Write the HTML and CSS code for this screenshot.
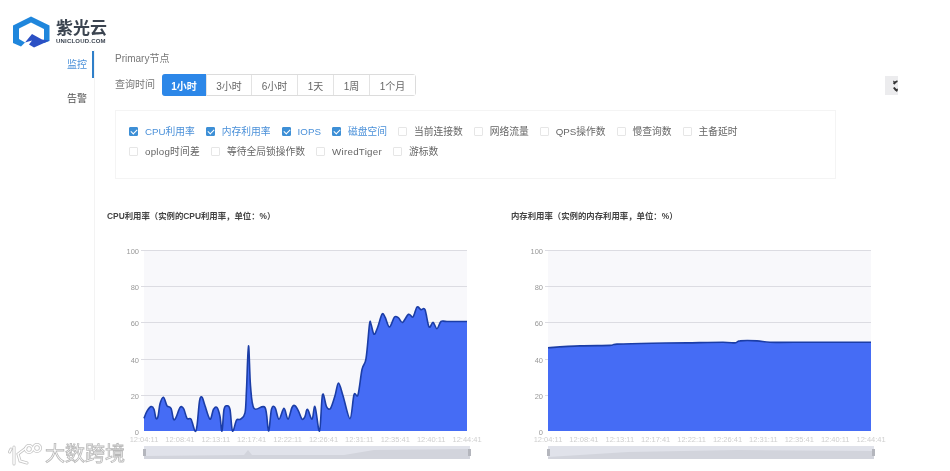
FILE: index.html
```html
<!DOCTYPE html>
<html lang="zh-CN">
<head>
<meta charset="UTF-8" />
<title>监控</title>
<link rel="stylesheet" href="styles.css">
</head>
<body>
<header class="brand">
  <svg class="brand-icon" width="37" height="32" viewBox="0 0 37 32">
    <path fill="#1f86dc" d="M18 .5 36.5 9.5V25L31 27V13L18 6.5 6 12.5V23L12 26.5 8 30.5 0 27V9.500Z"/>
    <path fill="#2b50c4" d="M12 26.5 19 18 29 23.5 36.5 24.5 21 31.5 16 28.5 19 24.5Z"/>
  </svg>
  <div class="brand-text">
    <span class="brand-name">紫光云</span>
    <span class="brand-site">UNICLOUD.COM</span>
  </div>
</header>

<div class="layout">
  <nav class="sidenav">
    <a class="sidenav-item active">监控</a>
    <a class="sidenav-item">告警</a>
  </nav>

  <main class="content">
    <div class="section-title">Primary节点</div>

    <div class="time-row">
      <span class="time-label">查询时间</span>
      <div class="btn-group">
        <button class="active w45">1小时</button>
        <button class="w45">3小时</button>
        <button class="w46">6小时</button>
        <button class="w36">1天</button>
        <button class="w36">1周</button>
        <button class="w45">1个月</button>
      </div>
      <div class="refresh">
        <svg width="13" height="19" viewBox="0 0 13 19">
          <path fill="none" stroke="#333" stroke-width="1.8" d="M12.5 5.2A6 6 0 0 0 8.800 8M8.800 11.5A6 6 0 0 0 12.5 14.5"/>
          <path fill="#333" d="M8 4.5 11.5 6.5 9 8.500ZM13 12.5 12 16 9.5 14Z"/>
        </svg>
      </div>
    </div>

    <div class="metric-box">
      <label class="metric on"><i></i>CPU利用率</label>
      <label class="metric on"><i></i>内存利用率</label>
      <label class="metric on"><i></i>IOPS</label>
      <label class="metric on"><i></i>磁盘空间</label>
      <label class="metric"><i></i>当前连接数</label>
      <label class="metric"><i></i>网络流量</label>
      <label class="metric"><i></i>QPS操作数</label>
      <label class="metric"><i></i>慢查询数</label>
      <label class="metric"><i></i>主备延时</label>
      <label class="metric wide"><i></i>oplog时间差</label>
      <label class="metric"><i></i>等待全局锁操作数</label>
      <label class="metric wide"><i></i>WiredTiger</label>
      <label class="metric"><i></i>游标数</label>
    </div>

    <div class="charts">
      <section class="chart">
        <h3>CPU利用率（实例的CPU利用率，单位：%）</h3>
        <svg id="cpuChart" width="404" height="225" viewBox="0 0 404 225"></svg>
      </section>
      <section class="chart">
        <h3>内存利用率（实例的内存利用率，单位：%）</h3>
        <svg id="memChart" width="404" height="225" viewBox="0 0 404 225"></svg>
      </section>
    </div>
  </main>
</div>

<div class="watermark">
  <svg width="36" height="24" viewBox="0 0 36 24">
    <g class="mark-edge">
      <path d="M3 6 1.5 9M6 4V21M18 5 10 11 12 18 19 20"/>
      <circle cx="21" cy="6" r="3.5"/>
      <circle cx="29" cy="5" r="3.5"/>
    </g>
    <g class="mark-core">
      <path d="M3 6 1.5 9M6 4V21M18 5 10 11 12 18 19 20"/>
      <circle cx="21" cy="6" r="3.5"/>
      <circle cx="29" cy="5" r="3.5"/>
    </g>
  </svg>
  <span>大数跨境</span>
</div>

<script src="charts.js"></script>
</body>
</html>
```

FILE: styles.css
```css
* {
  box-sizing: border-box;
}
html, body {
  height: 100%;
}
body {
  margin: 0;
  background: #fff;
  color: #666;
  font-family: "Liberation Sans", "Noto Sans CJK SC", sans-serif;
  font-size: 10px;
  overflow: hidden;
  filter: blur(0.4px);
}

.brand {
  display: flex;
  height: 50px;
  padding: 16px 0 0 13px;
}
.brand-text {
  display: flex;
  flex-direction: column;
  margin: 2px 0 0 6px;
}
.brand-name {
  font-size: 17px;
  line-height: 21px;
  font-weight: 700;
  color: #3b4450;
}
.brand-site {
  font-size: 6px;
  line-height: 7px;
  margin-top: -1px;
  font-weight: 700;
  letter-spacing: 0.2px;
  color: #3b4450;
}

.layout {
  display: flex;
}
.sidenav {
  width: 95px;
  height: 350px;
  flex: none;
  padding-top: 1px;
  border-right: 1px solid #f3f3f3;
}
.sidenav-item {
  display: block;
  height: 27px;
  margin-bottom: 7px;
  padding-right: 7px;
  line-height: 27px;
  text-align: right;
  color: #555;
}
.sidenav-item.active {
  color: #4a90d9;
  box-shadow: inset -2px 0 0 #2f7fc9;
}

.content {
  width: 803px;
  padding-left: 12px;
}
.section-title {
  margin: 1px 0 0 8px;
  line-height: 16px;
  color: #777;
}
.time-row {
  display: flex;
  align-items: center;
  margin: 7px 0 0 8px;
  height: 22px;
}
.time-label {
  width: 47px;
  margin-bottom: 3px;
  color: #777;
}
.btn-group {
  display: flex;
  height: 22px;
  border: 1px solid #dcdcdc;
  border-radius: 3px;
}
.btn-group button {
  padding: 0;
  background: #fff;
  border: 0;
  border-right: 1px solid #e3e3e3;
  color: #666;
  font: inherit;
}
.btn-group button:last-child {
  border-right: 0;
}
.btn-group button.active {
  margin: -1px 0 -1px -1px;
  border-radius: 3px 0 0 3px;
  background: #2c87e8;
  color: #fff;
  font-weight: 700;
}
.w45 { width: 45px; }
.w46 { width: 46px; }
.w36 { width: 36px; }
.refresh {
  display: flex;
  align-items: center;
  width: 13px;
  height: 19px;
  margin-left: auto;
  background: #ececee;
  overflow: hidden;
}

.metric-box {
  display: flex;
  flex-wrap: wrap;
  align-content: flex-start;
  gap: 0 11px;
  width: 721px;
  height: 69px;
  margin: 14px 0 0 8px;
  padding: 10px 90px 9px 13px;
  border: 1px solid #f4f4f4;
  font-size: 9.75px;
}
.metric {
  display: flex;
  align-items: center;
  height: 20px;
  color: #666;
}
.metric.wide {
  letter-spacing: 0.25px;
}
.metric i {
  width: 9px;
  height: 9px;
  margin-right: 7px;
  border: 1px solid #e6e6e6;
  border-radius: 1px;
}
.metric.on {
  color: #4a90d9;
}
.metric.on i {
  position: relative;
  border-color: #3d8fd6;
  background: #3d8fd6;
}
.metric.on i::after {
  content: "";
  position: absolute;
  left: 2px;
  top: 0;
  width: 3px;
  height: 5px;
  border: solid #fff;
  border-width: 0 1px 1px 0;
  transform: rotate(45deg);
}

.charts {
  display: flex;
  margin-top: 31px;
}
.chart {
  width: 404px;
}
.chart h3 {
  margin: 0 0 18px;
  font-size: 8.4px;
  line-height: 12px;
  font-weight: 700;
  color: #444;
}
.chart svg {
  display: block;
}
.chart text {
  font-size: 7.5px;
}
.chart .y-label {
  fill: #999;
  text-anchor: end;
}
.chart .x-label {
  text-anchor: middle;
  fill: #cfcfcf;
}
.plot-bg { fill: #f8f8fb; }
.grid { stroke: #dcdce2; stroke-width: 1; }
.area { fill: #456cf5; }
.line { fill: none; stroke: #1b3da6; stroke-width: 1.6; }
.zoom-bar { fill: #e0e2ea; }
.zoom-shadow { fill: #d2d4dc; }
.zoom-handle { fill: #b4b6bd; }

.watermark {
  position: absolute;
  left: 8px;
  top: 442px;
  display: flex;
  align-items: center;
  gap: 1px;
}
.mark-edge, .mark-core {
  fill: none;
  stroke-linecap: round;
}
.mark-edge { stroke: #c4c4c4; stroke-width: 3; }
.mark-core { stroke: #fff; stroke-width: 1.5; }
.watermark span {
  font-size: 20px;
  line-height: 25px;
  color: #fff;
  -webkit-text-stroke: 0.8px #b8b8b8;
}
```

FILE: charts.js
```js
// plot area inside each svg
const PLOT = { left: 37, top: 10, width: 323, height: 181 };
const TIMES = ['12:04:11', '12:08:41', '12:13:11', '12:17:41', '12:22:11', '12:26:41', '12:31:11', '12:35:41', '12:40:11', '12:44:41'];

// [x offset in plot px, value]
const cpuData = [
  [0,7],[3,11],[7,13.5],[10,12],[12,7],[14,8],[16,15],[19.5,18.7],[23,14],[27,12.5],[29.5,6.5],[32,7.5],
  [36,13],[39.5,12.5],[43,7],[47,6.5],[51,0],[53,3],[55.5,16.5],[58,18.7],[61,14],[66,6.5],[69.5,12],[73,13],
  [76,8],[78,0],[80,12],[83,14],[86,12],[88.5,0],[92.5,6],[96.5,6.5],[101,10],[102.5,23],[104.5,47],[106.5,25],
  [110,12.5],[121,13],[124.5,0],[127.5,12],[131,13],[135,6.5],[140,12.5],[144,6.5],[148,13],[151,14],[154.5,11],
  [158,6.5],[161,8],[163.5,12],[168,6.5],[171,13.5],[175.5,0],[178.5,20],[182.5,13.5],[186.5,12.5],[191,19.5],
  [194.5,26.5],[199,19.5],[206,6.8],[210,20],[214,20],[218,34],[222,40],[225.5,59],[227,59],[230,53.5],[233.5,57],
  [238,64.5],[241,63],[245.5,57.5],[250.5,63],[254.5,62.5],[258.5,60],[264.5,64.5],[269,63],[273,68.5],
  [277,67],[281,67],[285,57.5],[289,60],[293,56.5],[297,60.5],[303,60.5],[323,60.5]
];
const memData = [
  [0,46],[32,47],[62,47.3],[69,48],[104,48.5],[139,48.7],[175,49],[187,48.7],[192,49.8],[209,49.8],[222,49],[246,49],[323,49]
];

const SVG_NS = 'http://www.w3.org/2000/svg';

function el(parent, name, attrs, text) {
  const node = document.createElementNS(SVG_NS, name);
  Object.keys(attrs).forEach(k => node.setAttribute(k, attrs[k]));
  if (text) node.textContent = text;
  parent.appendChild(node);
  return node;
}

// catmull-rom through the points, gives the smooth echarts look
function smooth(points) {
  let d = `M${points[0][0]} ${points[0][1]}`;
  for (let i = 0; i < points.length - 1; i++) {
    const p0 = points[i - 1] || points[i];
    const p1 = points[i];
    const p2 = points[i + 1];
    const p3 = points[i + 2] || p2;
    const c1x = p1[0] + (p2[0] - p0[0]) / 6;
    const c1y = p1[1] + (p2[1] - p0[1]) / 6;
    const c2x = p2[0] - (p3[0] - p1[0]) / 6;
    const c2y = p2[1] - (p3[1] - p1[1]) / 6;
    d += `C${c1x.toFixed(1)} ${c1y.toFixed(1)} ${c2x.toFixed(1)} ${c2y.toFixed(1)} ${p2[0].toFixed(1)} ${p2[1].toFixed(1)}`;
  }
  return d;
}

function drawChart(id, data, shadow) {
  const svg = document.getElementById(id);
  const bottom = PLOT.top + PLOT.height;
  const right = PLOT.left + PLOT.width;
  const toY = v => Math.min(bottom, bottom - v / 100 * PLOT.height);

  el(svg, 'rect', { class: 'plot-bg', x: PLOT.left, y: PLOT.top, width: PLOT.width, height: PLOT.height });

  [0, 20, 40, 60, 80, 100].forEach(v => {
    const y = Math.round(toY(v)) + 0.5;
    if (v > 0) el(svg, 'line', { class: 'grid', x1: PLOT.left - 3, x2: right, y1: y, y2: y });
    el(svg, 'text', { class: 'y-label', x: PLOT.left - 5, y: y + 3 }, String(v));
  });

  const points = data.map(p => [PLOT.left + p[0], toY(p[1])]);
  const line = smooth(points);
  el(svg, 'path', { class: 'area', d: `${line}L${right} ${bottom}L${PLOT.left} ${bottom}Z` });
  el(svg, 'path', { class: 'line', d: line });

  TIMES.forEach((t, i) => {
    el(svg, 'text', { class: 'x-label', x: PLOT.left + i * 35.9, y: bottom + 11 }, t);
  });

  // data zoom slider under the plot
  const barTop = bottom + 15;
  el(svg, 'rect', { class: 'zoom-bar', x: PLOT.left, y: barTop, width: PLOT.width + 3, height: 13 });
  el(svg, 'path', { class: 'zoom-shadow', d: shadow.replace(/X/g, PLOT.left).replace(/R/g, right + 3).replace(/B/g, barTop + 13) });
  el(svg, 'rect', { class: 'zoom-handle', x: PLOT.left - 1, y: barTop + 3, width: 3, height: 7 });
  el(svg, 'rect', { class: 'zoom-handle', x: right + 1, y: barTop + 3, width: 3, height: 7 });
}

drawChart('cpuChart', cpuData, `MX ${PLOT.top + PLOT.height + 25}L${PLOT.left + 100} ${PLOT.top + PLOT.height + 24}L${PLOT.left + 104} ${PLOT.top + PLOT.height + 19}L${PLOT.left + 108} ${PLOT.top + PLOT.height + 24}L${PLOT.left + 200} ${PLOT.top + PLOT.height + 24}L${PLOT.left + 230} ${PLOT.top + PLOT.height + 19}LR ${PLOT.top + PLOT.height + 18}LR BLX BZ`);
drawChart('memChart', memData, `MX ${PLOT.top + PLOT.height + 26}L${PLOT.left + 80} ${PLOT.top + PLOT.height + 21}L${PLOT.left + 190} ${PLOT.top + PLOT.height + 19}LR ${PLOT.top + PLOT.height + 20}LR BLX BZ`);
```
